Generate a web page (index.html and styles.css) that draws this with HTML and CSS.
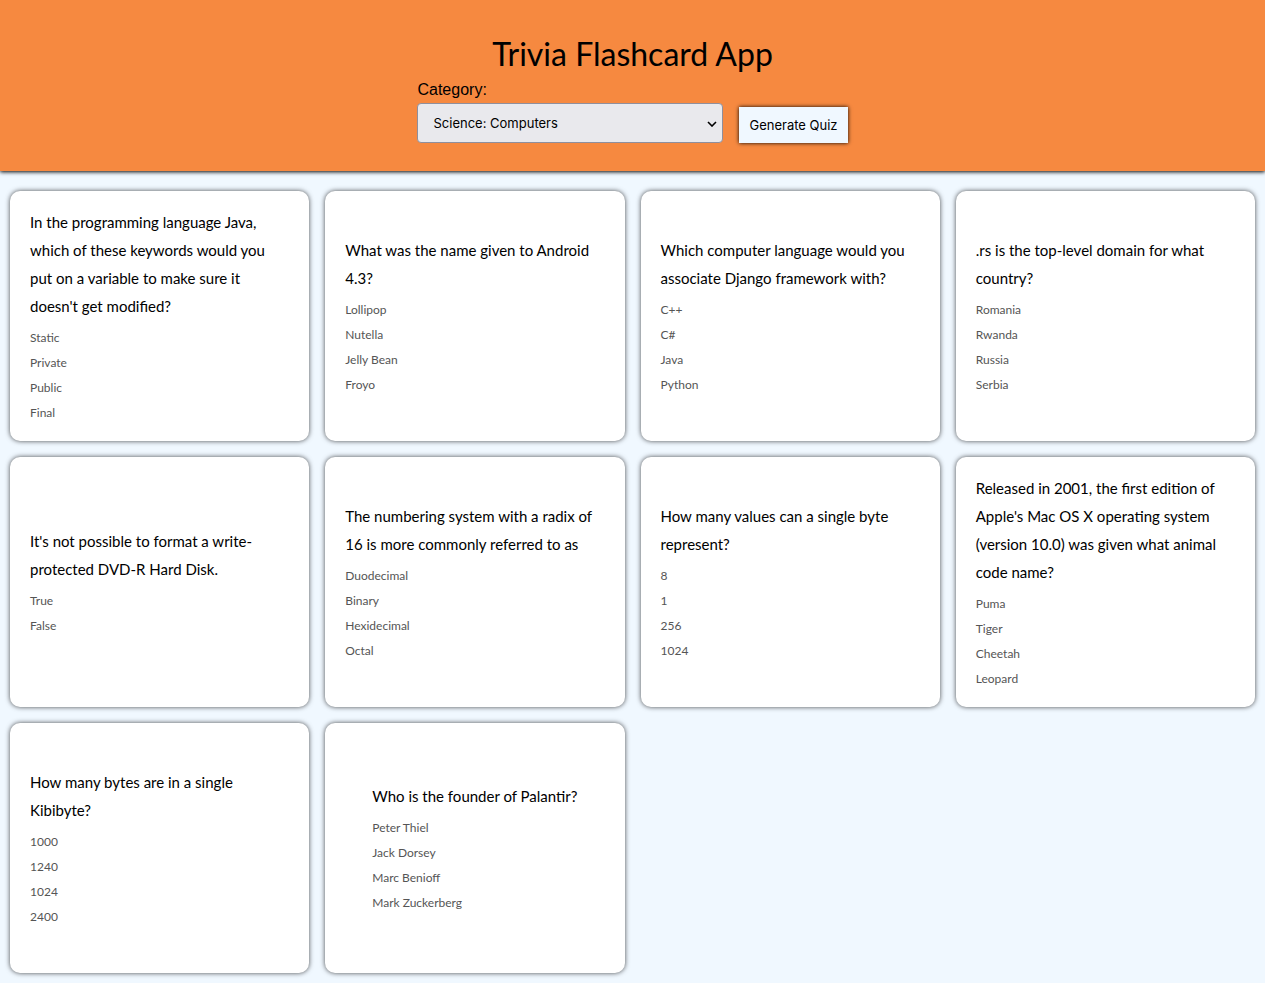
FILE: index.html
```html
<!DOCTYPE html>
<html lang="en">
<head>
<meta charset="utf-8">
<meta name="viewport" content="width=device-width, initial-scale=1">
<title>Trivia Flashcard App</title>
<link rel="stylesheet" href="styles.css">
</head>
<body>
<header class="header">
  <h1 class="title">Trivia Flashcard App</h1>
  <form class="quiz-form">
    <div class="form-group">
      <label for="category">Category:</label>
      <div class="select-wrap">
        <select id="category" class="category-select"><option>Science: Computers</option></select>
        <svg class="chevron" viewBox="0 0 10 6" aria-hidden="true"><path d="M1 1l4 4 4-4"/></svg>
      </div>
    </div>
    <button class="generate" type="button">Generate Quiz</button>
  </form>
</header>
<main class="card-grid">
  <article class="card"><div class="front"><p class="question">In the programming language Java, which of these keywords would you put on a variable to make sure it doesn't get modified?</p><ul class="options"><li>Static</li><li>Private</li><li>Public</li><li>Final</li></ul></div></article>
  <article class="card"><div class="front"><p class="question">What was the name given to Android 4.3?</p><ul class="options"><li>Lollipop</li><li>Nutella</li><li>Jelly Bean</li><li>Froyo</li></ul></div></article>
  <article class="card"><div class="front"><p class="question">Which computer language would you associate Django framework with?</p><ul class="options"><li>C++</li><li>C#</li><li>Java</li><li>Python</li></ul></div></article>
  <article class="card"><div class="front"><p class="question">.rs is the top-level domain for what country?</p><ul class="options"><li>Romania</li><li>Rwanda</li><li>Russia</li><li>Serbia</li></ul></div></article>
  <article class="card"><div class="front"><p class="question">It's not possible to format a write-protected DVD-R Hard Disk.</p><ul class="options"><li>True</li><li>False</li></ul></div></article>
  <article class="card"><div class="front"><p class="question">The numbering system with a radix of 16 is more commonly referred to as</p><ul class="options"><li>Duodecimal</li><li>Binary</li><li>Hexidecimal</li><li>Octal</li></ul></div></article>
  <article class="card"><div class="front"><p class="question">How many values can a single byte represent?</p><ul class="options"><li>8</li><li>1</li><li>256</li><li>1024</li></ul></div></article>
  <article class="card"><div class="front"><p class="question">Released in 2001, the first edition of Apple's Mac OS X operating system (version 10.0) was given what animal code name?</p><ul class="options"><li>Puma</li><li>Tiger</li><li>Cheetah</li><li>Leopard</li></ul></div></article>
  <article class="card"><div class="front"><p class="question">How many bytes are in a single Kibibyte?</p><ul class="options"><li>1000</li><li>1240</li><li>1024</li><li>2400</li></ul></div></article>
  <article class="card"><div class="front"><p class="question">Who is the founder of Palantir?</p><ul class="options"><li>Peter Thiel</li><li>Jack Dorsey</li><li>Marc Benioff</li><li>Mark Zuckerberg</li></ul></div></article>
</main>
</body>
</html>
```
FILE: styles.css
```css
* {
  box-sizing: border-box;
}

body {
  margin: 0;
  background: #f0f8ff;
  color: #000;
  font-family: Lato, sans-serif;
}

.header {
  display: flex;
  flex-direction: column;
  align-items: center;
  padding: 32px 20px 28px;
  background: #f68940;
  box-shadow: 0 1px 4px #000;
}

.title {
  margin: 0 0 4px;
  font: 400 32px/44px Lato, sans-serif;
}

.quiz-form {
  display: flex;
  align-items: flex-end;
  gap: 16px;
}

.form-group {
  font: 16px/20px "Liberation Sans", Arial, sans-serif;
}

.form-group label {
  display: block;
  margin-bottom: 3px;
}

.select-wrap {
  position: relative;
}

.category-select {
  display: block;
  width: 306px;
  height: 40px;
  padding: 0 32px 0 15px;
  appearance: none;
  border: 1px solid #8f8f9d;
  border-radius: 4px;
  background: #e9e9ed;
  color: #000;
  font: 13px Inter, sans-serif;
}

.chevron {
  position: absolute;
  top: 18px;
  right: 6px;
  width: 10px;
  height: 6px;
  fill: none;
  stroke: #000;
  stroke-width: 1.6;
  pointer-events: none;
}

.generate {
  padding: 10px;
  border: 0;
  background: #f0f8ff;
  box-shadow: 0 0 4px #000;
  color: #000;
  font: 13px/16px Inter, sans-serif;
}

.card-grid {
  display: grid;
  grid-template-columns: repeat(auto-fill, minmax(260px, 1fr));
  gap: 16px;
  padding: 20px 10px 10px;
}

.card {
  display: flex;
  align-items: center;
  justify-content: center;
  min-height: 250px;
  padding: 16px 20px;
  border-radius: 10px;
  background: #fff;
  box-shadow: 0 0 5px rgba(0, 0, 0, 0.7);
}

.question {
  margin: 0 0 5px;
  font: 15px/28px Lato, sans-serif;
}

.options {
  margin: 0;
  padding: 0;
  list-style: none;
  color: #555;
  font: 12px/25px Lato, sans-serif;
}
```
